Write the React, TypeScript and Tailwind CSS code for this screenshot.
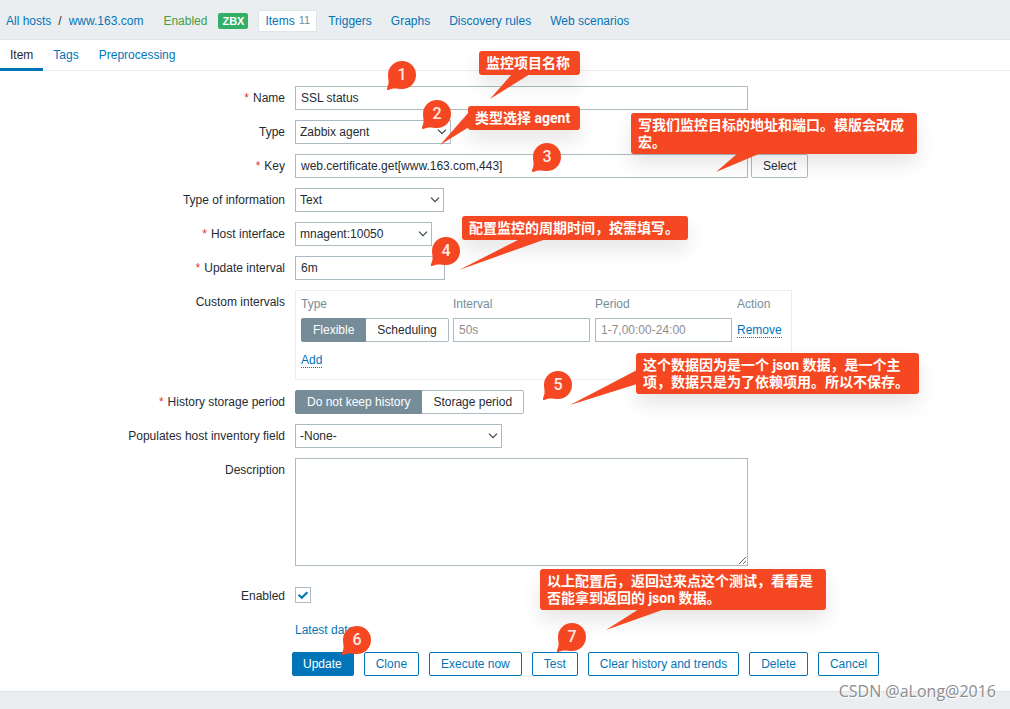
import { useState, type ReactNode } from 'react'

type Point = [number, number]

type CalloutData = {
  left: number
  top: number
  width: number
  lines: string[]
  /** Triangle of the tail, relative to the top left corner of the box. */
  tail: Point[]
}

const navLinks = ['Triggers', 'Graphs', 'Discovery rules', 'Web scenarios']

const callouts: CalloutData[] = [
  { left: 479, top: 51, width: 101, lines: ['监控项目名称'], tail: [[33, 23], [51, 23], [11, 48]] },
  { left: 468, top: 106, width: 112, lines: ['类型选择 agent'], tail: [[1, 6], [1, 21], [-28, 39]] },
  {
    left: 631,
    top: 113,
    width: 286,
    lines: ['写我们监控目标的地址和端口。模版会改成', '宏。'],
    tail: [[107, 40], [130, 40], [85, 59]],
  },
  { left: 462, top: 216, width: 226, lines: ['配置监控的周期时间，按需填写。'], tail: [[58, 23], [84, 23], [-3, 54]] },
  {
    left: 636,
    top: 353,
    width: 283,
    lines: ['这个数据因为是一个 json 数据，是一个主', '项，数据只是为了依赖项用。所以不保存。'],
    tail: [[1, 17], [1, 31], [-66, 52]],
  },
  {
    left: 540,
    top: 569,
    width: 286,
    lines: ['以上配置后，返回过来点这个测试，看看是', '否能拿到返回的 json 数据。'],
    tail: [[99, 40], [125, 40], [66, 61]],
  },
]

const pins: Point[] = [
  [402, 75],
  [437, 114],
  [547, 157],
  [446, 251],
  [558, 385],
  [357, 640],
  [572, 637],
]

const controlClass =
  'h-6 border border-[#acbbc2] bg-white text-xs text-[#1f2c33] outline-none placeholder:text-[#8e8e8e] focus:border-[#0275b8]'
const inputClass = `px-[5px] ${controlClass}`
const linkClass = 'text-[#0275b8] hover:underline'
const dottedLinkClass = 'border-b border-dotted border-[#0275b8] leading-[14px] text-[#0275b8]'

function Row({
  label,
  htmlFor,
  required,
  children,
}: {
  label?: string
  htmlFor?: string
  required?: boolean
  children: ReactNode
}) {
  return (
    <div className="flex items-start gap-2.5">
      <div className="w-[285px] shrink-0 text-right leading-6">
        {label ? (
          <label htmlFor={htmlFor}>
            {required ? <span className="mr-1 text-[#e33734]">*</span> : null}
            {label}
          </label>
        ) : null}
      </div>
      {children}
    </div>
  )
}

function Select({ id, value, className }: { id: string; value: string; className: string }) {
  return (
    <div className={`relative ${className}`}>
      <select id={id} className={`block w-full appearance-none pr-5 pl-1 ${controlClass}`}>
        <option>{value}</option>
      </select>
      <svg
        viewBox="0 0 10 6"
        className="pointer-events-none absolute top-[9px] right-1 h-1.5 w-2.5 fill-none stroke-[#36474f]"
        aria-hidden
      >
        <path d="M1 0.7 5 4.7 9 0.7" strokeWidth="1.2" />
      </svg>
    </div>
  )
}

function Segmented({ name, options }: { name: string; options: [string, string] }) {
  const [selected, setSelected] = useState(options[0])
  return (
    <div className="flex h-6" role="radiogroup" aria-label={name}>
      {options.map((option, i) => (
        <label
          key={option}
          className={`relative cursor-pointer border px-[11px] leading-[22px] whitespace-nowrap ${
            i === 0 ? 'rounded-l-xs' : 'rounded-r-xs border-l-0'
          } ${
            selected === option
              ? 'border-[#768d99] bg-[#768d99] text-white'
              : 'border-[#acbbc2] bg-white text-[#1f2c33]'
          }`}
        >
          <input
            type="radio"
            name={name}
            checked={selected === option}
            onChange={() => setSelected(option)}
            className="sr-only"
          />
          {option}
        </label>
      ))}
    </div>
  )
}

function ActionButton({ primary, children }: { primary?: boolean; children: ReactNode }) {
  return (
    <button
      type="button"
      className={`h-6 rounded-xs border border-[#0275b8] pr-[11px] leading-[22px] ${
        primary ? 'bg-[#0275b8] pl-2.5 text-white' : 'bg-white pl-[11px] text-[#0275b8]'
      }`}
    >
      {children}
    </button>
  )
}

function Callout({ left, top, width, lines, tail }: CalloutData) {
  return (
    <div className="absolute" style={{ left, top, width }}>
      <div
        className={`rounded-[3px] bg-[#f44722] pb-[3px] pl-[7px] font-['Roboto','Noto_Sans_CJK_SC',sans-serif] text-sm font-bold whitespace-nowrap text-white shadow-[0_10px_20px_rgba(0,0,0,0.1)] ${
          lines.length > 1 ? 'pt-1 leading-[17px]' : 'pt-[3px] leading-[18px]'
        }`}
      >
        {lines.map((line) => (
          <p key={line} className={lines.length > 1 ? 'h-[17px]' : 'h-[18px]'}>
            {line}
          </p>
        ))}
      </div>
      <svg className="absolute top-0 left-0 h-px w-px overflow-visible fill-[#f44722]" aria-hidden>
        <polygon points={tail.join(' ')} />
      </svg>
    </div>
  )
}

function Pin({ x, y, label }: { x: number; y: number; label: number }) {
  return (
    <div
      className="absolute flex size-7 items-center justify-center"
      style={{ left: x - 14, top: y - 14 }}
    >
      <svg viewBox="-14 -14 28 28" className="absolute inset-0 size-7 overflow-visible fill-[#f44722]" aria-hidden>
        <path d="M-14 0A14 14 0 1 1 0 14C-4 14-6 13-9 13.6L-14 15Q-15.6 15-15 13.4L-13.6 9C-13 6-14 3-14 0Z" />
      </svg>
      <span className="relative font-['Roboto',sans-serif] text-base leading-none font-medium text-[#ffe9e4]">
        {label}
      </span>
    </div>
  )
}

export default function App() {
  const [name, setName] = useState('SSL status')
  const [itemKey, setItemKey] = useState('web.certificate.get[www.163.com,443]')
  const [delay, setDelay] = useState('6m')
  const [enabled, setEnabled] = useState(true)

  return (
    <div className="relative min-h-screen overflow-hidden bg-[#ebeef0] font-['Liberation_Sans',Arial,sans-serif] text-xs text-[#1f2c33]">
      <header className="flex h-10 items-center border-b border-[#dfe4e7] pt-0.5 pl-1.5">
        <nav className="flex items-center">
          <a href="#hosts" className={linkClass}>All hosts</a>
          <span className="mx-[7px]">/</span>
          <a href="#host" className={linkClass}>www.163.com</a>
          <span className="ml-5 text-[#429e47]">Enabled</span>
          <span className="ml-[11px] h-4 rounded-xs bg-[#34af67] px-1 text-[11px] leading-4 font-bold text-white">ZBX</span>
          <a
            href="#items"
            className="mr-[11px] ml-2.5 flex h-[22px] items-center gap-1 border border-[#dfe4e7] bg-white px-1.5 text-[#0275b8]"
          >
            Items <span className="text-[11px] text-[#768d99]">11</span>
          </a>
          <span className="flex gap-[19px]">
            {navLinks.map((item) => (
              <a key={item} href="#nav" className={linkClass}>{item}</a>
            ))}
          </span>
        </nav>
      </header>

      <main className="border-b border-[#dfe4e7] bg-white">
        <div className="flex h-[31px] border-b border-[#ebeef0]" role="tablist">
          <button type="button" role="tab" aria-selected className="h-[31px] border-b-3 border-[#0275b8] px-2.5 pt-0.5">
            Item
          </button>
          <button type="button" role="tab" aria-selected={false} className="h-[31px] border-b-3 border-transparent px-2.5 pt-0.5 text-[#0275b8]">
            Tags
          </button>
          <button type="button" role="tab" aria-selected={false} className="h-[31px] border-b-3 border-transparent px-2.5 pt-0.5 text-[#0275b8]">
            Preprocessing
          </button>
        </div>

        <form className="flex flex-col gap-2.5 pt-[15px] pb-[15px]" onSubmit={(e) => e.preventDefault()}>
          <Row label="Name" htmlFor="name" required>
            <input id="name" value={name} onChange={(e) => setName(e.target.value)} className={`w-[453px] ${inputClass}`} />
          </Row>
          <Row label="Type" htmlFor="type">
            <Select id="type" value="Zabbix agent" className="w-[156px]" />
          </Row>
          <Row label="Key" htmlFor="key" required>
            <div className="flex gap-[3px]">
              <input id="key" value={itemKey} onChange={(e) => setItemKey(e.target.value)} className={`w-[453px] ${inputClass}`} />
              <button type="button" className="h-6 rounded-xs border border-[#acbbc2] bg-white px-[11px] leading-[22px]">
                Select
              </button>
            </div>
          </Row>
          <Row label="Type of information" htmlFor="value-type">
            <Select id="value-type" value="Text" className="w-[149px]" />
          </Row>
          <Row label="Host interface" htmlFor="interface" required>
            <Select id="interface" value="mnagent:10050" className="w-[137px]" />
          </Row>
          <Row label="Update interval" htmlFor="delay" required>
            <input id="delay" value={delay} onChange={(e) => setDelay(e.target.value)} className={`w-[150px] ${inputClass}`} />
          </Row>
          <Row label="Custom intervals">
            <div className="border border-[#ebeef0] px-[5px]">
              <table className="table-fixed border-collapse">
                <thead>
                  <tr className="h-[27px] text-left text-[#768d99]">
                    <th className="w-[152px] p-0 pb-0.5 font-normal">Type</th>
                    <th className="w-[142px] p-0 pb-0.5 font-normal">Interval</th>
                    <th className="w-[142px] p-0 pb-0.5 font-normal">Period</th>
                    <th className="w-[49px] p-0 pb-0.5 font-normal">Action</th>
                  </tr>
                </thead>
                <tbody>
                  <tr className="h-6">
                    <td className="p-0">
                      <Segmented name="Interval type" options={['Flexible', 'Scheduling']} />
                    </td>
                    <td className="p-0">
                      <input aria-label="Interval" placeholder="50s" className={`block w-[137px] ${inputClass}`} />
                    </td>
                    <td className="p-0">
                      <input aria-label="Period" placeholder="1-7,00:00-24:00" className={`block w-[137px] ${inputClass}`} />
                    </td>
                    <td className="p-0">
                      <button type="button" className={dottedLinkClass}>Remove</button>
                    </td>
                  </tr>
                  <tr className="h-[37px]">
                    <td colSpan={4} className="p-0 pb-0.5">
                      <button type="button" className={dottedLinkClass}>Add</button>
                    </td>
                  </tr>
                </tbody>
              </table>
            </div>
          </Row>
          <Row label="History storage period" required>
            <Segmented name="History storage period" options={['Do not keep history', 'Storage period']} />
          </Row>
          <Row label="Populates host inventory field" htmlFor="inventory">
            <Select id="inventory" value="-None-" className="w-[207px]" />
          </Row>
          <Row label="Description" htmlFor="description">
            <textarea
              id="description"
              className="mb-2 block h-[108px] w-[453px] resize border border-[#acbbc2] bg-white px-[5px] py-1 outline-none"
            />
          </Row>
          <Row label="Enabled" htmlFor="enabled">
            <div className="relative mt-[3px] size-4">
              <input
                id="enabled"
                type="checkbox"
                checked={enabled}
                onChange={(e) => setEnabled(e.target.checked)}
                className="block size-4 appearance-none border border-[#acbbc2] bg-white"
              />
              {enabled ? (
                <svg viewBox="0 0 16 16" className="pointer-events-none absolute inset-0 size-4 fill-none stroke-[#0275b8]" aria-hidden>
                  <path d="M3.6 7.8 6.8 10.8 12.4 5.2" strokeWidth="2.2" />
                </svg>
              ) : null}
            </div>
          </Row>
          <Row>
            <a href="#latest" className={`leading-6 ${linkClass}`}>Latest data</a>
          </Row>
          <div className="flex gap-2.5 pl-[292px]">
            <ActionButton primary>Update</ActionButton>
            <ActionButton>Clone</ActionButton>
            <ActionButton>Execute now</ActionButton>
            <ActionButton>Test</ActionButton>
            <ActionButton>Clear history and trends</ActionButton>
            <ActionButton>Delete</ActionButton>
            <ActionButton>Cancel</ActionButton>
          </div>
        </form>
      </main>

      <div className="pointer-events-none absolute inset-0">
        {callouts.map((callout) => (
          <Callout key={callout.top} {...callout} />
        ))}
        {pins.map(([x, y], i) => (
          <Pin key={i} x={x} y={y} label={i + 1} />
        ))}
        <p className="absolute right-3.5 bottom-2 font-['Open_Sans',sans-serif] text-base leading-5 text-[#8b8e90] [text-shadow:1px_1px_0_#ffffff]">
          CSDN @aLong@2016
        </p>
      </div>
    </div>
  )
}
